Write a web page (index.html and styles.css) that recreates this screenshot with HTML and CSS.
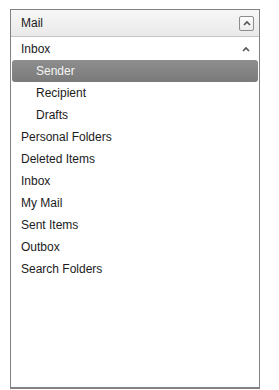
FILE: index.html
```html
<!DOCTYPE html>
<html lang="en">
<head>
    <meta charset="UTF-8">
    <meta name="viewport" content="width=device-width, initial-scale=1.0">
    <title>Mail</title>
    <link rel="stylesheet" href="styles.css">
</head>
<body>
    <div class="panel">
        <div class="panel-header">
            <span>Mail</span>
            <span class="collapse-btn">
                <svg width="8" height="6" viewBox="0 0 8 6"><path d="M1 5 L4 2 L7 5" fill="none" stroke="#555" stroke-width="1.6"/></svg>
            </span>
        </div>
        <div class="tree">
            <div class="item group">
                <span>Inbox</span>
                <svg width="8" height="6" viewBox="0 0 8 6"><path d="M1 5 L4 2 L7 5" fill="none" stroke="#555" stroke-width="1.6"/></svg>
            </div>
            <div class="item child selected">Sender</div>
            <div class="item child">Recipient</div>
            <div class="item child">Drafts</div>
            <div class="item">Personal Folders</div>
            <div class="item">Deleted Items</div>
            <div class="item">Inbox</div>
            <div class="item">My Mail</div>
            <div class="item">Sent Items</div>
            <div class="item">Outbox</div>
            <div class="item">Search Folders</div>
        </div>
    </div>
</body>
</html>
```
FILE: styles.css
```css
body {
    margin: 0;
    padding: 9px 0 0 10px;
    background: #fff;
    font-family: "Liberation Sans", Arial, sans-serif;
    font-size: 12px;
    color: #1b1b1b;
}
.panel {
    width: 248px;
    height: 377px;
    border: 1px solid #828282;
    border-bottom-width: 2px;
    background: #fff;
    display: flex;
    flex-direction: column;
}
.panel-header {
    height: 26px;
    border-bottom: 1px solid #c4c4c4;
    background: linear-gradient(#f7f7f7, #e9e9e9);
    display: flex;
    align-items: center;
    justify-content: space-between;
    padding: 0 5px 0 10px;
}
.collapse-btn {
    width: 13px;
    height: 13px;
    border: 1px solid #8c8c8c;
    border-radius: 2px;
    background: linear-gradient(#fdfdfd, #ececec);
    display: flex;
    align-items: center;
    justify-content: center;
}
.tree {
    display: flex;
    flex-direction: column;
    padding: 1px 1px 0;
}
.item {
    height: 22px;
    display: flex;
    align-items: center;
    padding-left: 9px;
}
.group {
    justify-content: space-between;
    padding-right: 8px;
}
.child {
    padding-left: 24px;
}
.selected {
    background: linear-gradient(#8e8e8e, #7a7a7a);
    color: #f4f4f4;
    border-radius: 3px;
}
```
